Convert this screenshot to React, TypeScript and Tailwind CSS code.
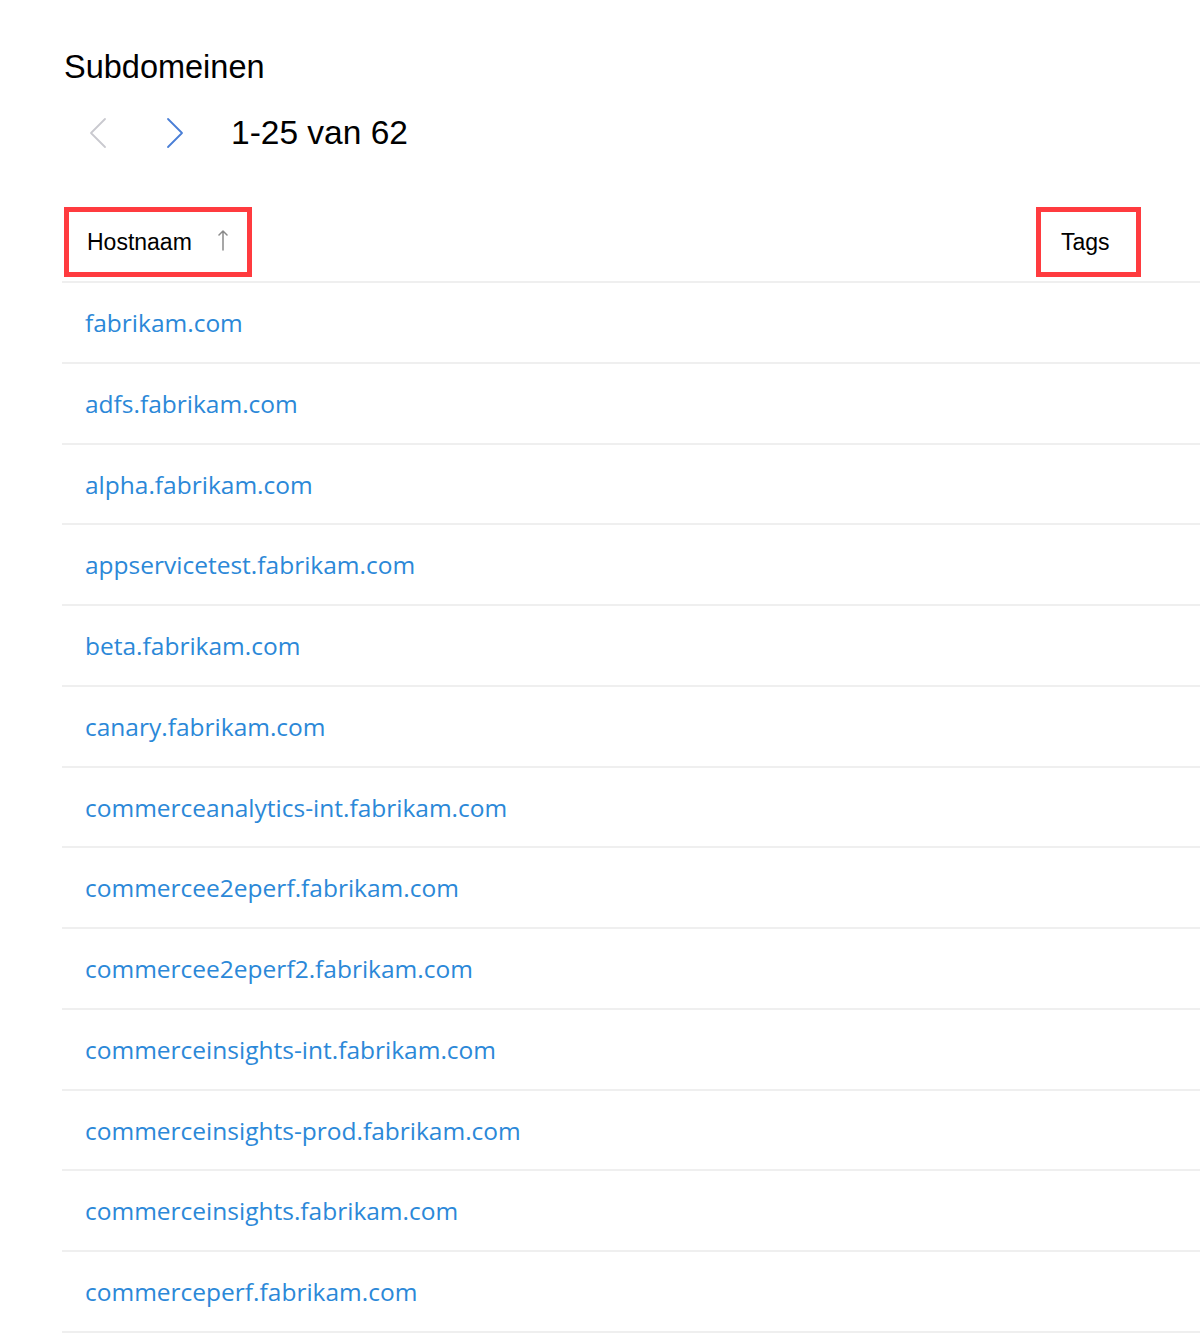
import React from 'react';

const hosts = [
    'fabrikam.com',
    'adfs.fabrikam.com',
    'alpha.fabrikam.com',
    'appservicetest.fabrikam.com',
    'beta.fabrikam.com',
    'canary.fabrikam.com',
    'commerceanalytics-int.fabrikam.com',
    'commercee2eperf.fabrikam.com',
    'commercee2eperf2.fabrikam.com',
    'commerceinsights-int.fabrikam.com',
    'commerceinsights-prod.fabrikam.com',
    'commerceinsights.fabrikam.com',
    'commerceperf.fabrikam.com',
];

const Chevron = ({ dir, color }: { dir: 'left' | 'right'; color: string }) => (
    <svg width="20" height="32" viewBox="0 0 20 32" fill="none">
        <path
            d={dir === 'left' ? 'M17 2 L3 16 L17 30' : 'M3 2 L17 16 L3 30'}
            stroke={color}
            strokeWidth="1.8"
            strokeLinecap="round"
            strokeLinejoin="round"
        />
    </svg>
);

const App = () => {
    return (
        <div className="w-[1200px] h-[1339px] overflow-hidden bg-white pl-[62px] font-['Liberation_Sans',Arial,sans-serif] text-black">
            {/* Title */}
            <h1 className="pt-[51px] ml-[2px] text-[32.5px] leading-8 font-normal">Subdomeinen</h1>

            {/* Pagination */}
            <div className="mt-[33px] flex items-center h-[34px]">
                <button className="ml-[26px]">
                    <Chevron dir="left" color="#c9c9cf" />
                </button>
                <button className="ml-[57px]">
                    <Chevron dir="right" color="#4a7fd6" />
                </button>
                <span className="ml-[46px] text-[33.5px] leading-[34px]">1-25 van 62</span>
            </div>

            {/* Column headers */}
            <div className="mt-[57px] h-[76px] border-b-2 border-[#efefef] flex items-start justify-between pr-[59px]">
                <div className="ml-[2px] w-[188px] h-[70px] border-[5px] border-[#ff3b3f] flex items-center pl-[18px] text-[23px]">
                    <span>Hostnaam</span>
                    <svg className="ml-[26px] mb-[4px]" width="10" height="22" viewBox="0 0 10 22" fill="none">
                        <path d="M5 21 V2 M1 6 L5 2 L9 6" stroke="#8a8a8a" strokeWidth="1.5" strokeLinecap="round" strokeLinejoin="round" />
                    </svg>
                </div>
                <div className="w-[105px] h-[70px] border-[5px] border-[#ff3b3f] flex items-center pl-[20px] text-[23px]">
                    Tags
                </div>
            </div>

            {/* Rows */}
            <div className="flex flex-col">
                {hosts.map((h) => (
                    <div key={h} className="h-[80.75px] border-b-2 border-[#efefef] flex items-center pl-[23px]">
                        <a href="#" className="text-[24.5px] leading-none text-[#2b88d8] font-['Open_Sans',sans-serif] pt-[2px]">
                            {h}
                        </a>
                    </div>
                ))}
            </div>
        </div>
    );
};

export default App;
